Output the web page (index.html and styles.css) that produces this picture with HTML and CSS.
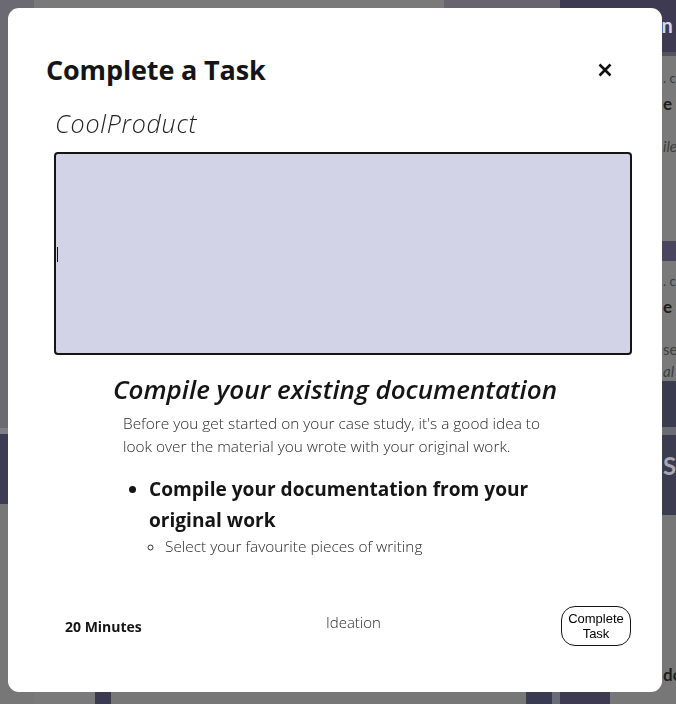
FILE: index.html
```html
<!DOCTYPE html>
<html lang="en">
<head>
<meta charset="utf-8">
<title>Complete a Task</title>
<link rel="stylesheet" href="styles.css">
</head>
<body>
<div class="page">
  <div class="col col-a">
    <div class="seg a1"></div>
    <div class="seg a2"></div>
    <div class="seg a3"></div>
    <div class="seg a4"></div>
  </div>
  <div class="col col-b"></div>
  <div class="col col-c">
    <div class="seg c1"></div>
    <div class="seg c2"></div>
  </div>
  <div class="col col-d">
    <div class="seg d1"></div>
    <div class="seg d2"></div>
  </div>
  <div class="col col-e">
    <div class="seg e1"></div>
    <div class="seg e2"></div>
  </div>
  <div class="col col-f">
    <div class="seg f1"></div>
    <div class="seg f2"></div>
  </div>
  <div class="col col-g">
    <div class="seg g1"></div>
    <div class="seg g2"></div>
  </div>
  <div class="col col-h"></div>
  <div class="col col-i">
    <div class="bg-head"><span>Plan</span></div>
    <div class="bg-card">
      <p class="bg-meta">. c</p>
      <p class="bg-title">e y</p>
      <p class="bg-sub">ile</p>
    </div>
    <div class="bg-band"></div>
    <div class="bg-card bg-card2">
      <p class="bg-meta">. c</p>
      <p class="bg-title">e y</p>
      <p class="bg-text">se</p>
      <p class="bg-sub">al</p>
    </div>
    <div class="bg-dark"></div>
    <div class="bg-section"><span>S</span></div>
    <div class="bg-rest"><p class="bg-title">dc</p></div>
  </div>
</div>

<div class="modal" role="dialog" aria-labelledby="modal-title">
  <div class="modal-header">
    <h2 id="modal-title" class="modal-title">Complete a Task</h2>
    <button class="close-btn" aria-label="Close">
      <svg width="14" height="14" viewBox="0 0 14 14"><path d="M1.5 1.5 L12.5 12.5 M12.5 1.5 L1.5 12.5" stroke="#111" stroke-width="2.6" stroke-linecap="butt"/></svg>
    </button>
  </div>
  <p class="product">CoolProduct</p>
  <div class="editor"><span class="caret"></span></div>

  <div class="task">
    <h3 class="task-title">Compile your existing documentation</h3>
    <div class="task-body">
      <p class="task-desc">Before you get started on your case study, it's a good idea to look over the material you wrote with your original work.</p>
      <ul class="steps">
        <li class="step">Compile your documentation from your original work
          <ul class="substeps">
            <li>Select your favourite pieces of writing</li>
          </ul>
        </li>
      </ul>
    </div>
  </div>

  <div class="modal-footer">
    <span class="duration">20 Minutes</span>
    <span class="phase">Ideation</span>
    <button class="complete-btn">Complete<br>Task</button>
  </div>
</div>
</body>
</html>
```

FILE: styles.css
```css
html, body {
  margin: 0;
  padding: 0;
}
body {
  width: 676px;
  height: 704px;
  overflow: hidden;
  font-family: "Open Sans", "Noto Sans", sans-serif;
  background: #777777;
}

/* background page (dimmed) */
.page {
  display: flex;
  height: 704px;
}
.col {
  display: flex;
  flex-direction: column;
}
.seg { flex: none; }
.col-a { width: 34px; }
.a1 { height: 428px; background: #6b6a73; }
.a2 { height: 6px; background: #808084; }
.a3 { height: 70px; background: #3c3c55; }
.a4 { flex: 1; background: #777777; }
.col-b { width: 61px; background: #7a7a7a; }
.col-c { width: 16px; }
.c1 { flex: 1; background: #7a7a7a; }
.c2 { height: 40px; background: #3a3a50; }
.col-d { width: 333px; }
.d1 { flex: 1; background: #7a7a7a; }
.d2 { height: 40px; background: #777777; }
.col-e { width: 82px; }
.e1 { flex: 1; background: #67646f; }
.e2 { height: 40px; background: #777777; }
.col-f { width: 26px; }
.f1 { flex: 1; background: #67646f; }
.f2 { height: 40px; background: #3a3a52; }
.col-g { width: 8px; }
.g1 { flex: 1; background: #67646f; }
.g2 { height: 40px; background: #6a6a78; }
.col-h { width: 50px; background: #3d3a52; }
.col-i {
  width: 66px;
  background: #7a7a7a;
  overflow: hidden;
  white-space: nowrap;
  font-family: "Lato", sans-serif;
}
.col-i p { margin: 0; padding-left: 53px; }
.bg-head {
  height: 56px;
  background: #3d3a52;
  border-bottom: 4px solid #55525f;
  color: #d8d6e0;
  font-weight: 700;
  font-size: 20px;
  padding-left: 24px;
  box-sizing: border-box;
  line-height: 50px;
}
.bg-card {
  height: 185px;
  padding-top: 14px;
  box-sizing: border-box;
}
.bg-meta { font-size: 13px; color: #3c3c3c; line-height: 16px; }
.bg-title { font-size: 17px; font-weight: 700; color: #1e1e1e; line-height: 20px; margin-top: 8px !important; }
.bg-sub { font-size: 15px; font-style: italic; color: #3e3e3e; line-height: 20px; margin-top: 22px !important; }
.bg-band { height: 20px; background: #4a4660; }
.bg-card2 { height: 120px; padding-top: 12px; }
.bg-card2 .bg-text { font-size: 15px; color: #3e3e3e; line-height: 20px; margin-top: 22px !important; }
.bg-card2 .bg-sub { margin-top: 2px !important; }
.bg-dark { height: 46px; background: #3b3b4f; border-bottom: 8px solid #6c6b75; }
.bg-section {
  height: 80px;
  background: #3d3b4f;
  color: #a8a7b4;
  font-weight: 700;
  font-size: 24px;
  line-height: 62px;
  padding-left: 53px;
  box-sizing: border-box;
}
.bg-rest { flex: 1; background: #777777; padding-top: 142px; }

/* modal */
.modal {
  position: fixed;
  top: 8px;
  left: 8px;
  width: 654px;
  height: 684px;
  box-sizing: border-box;
  background: #ffffff;
  border-radius: 11px;
  display: flex;
  flex-direction: column;
  color: #151515;
}
.modal-header {
  display: flex;
  justify-content: space-between;
  align-items: center;
  margin: 45px 50px 0 38px;
}
.modal-title {
  margin: 0;
  font-size: 27px;
  font-weight: 700;
  line-height: 34px;
  letter-spacing: -0.15px;
  color: #151515;
}
.close-btn {
  border: 0;
  background: transparent;
  padding: 0;
  width: 14px;
  height: 14px;
  display: flex;
}
.product {
  margin: 20px 0 0 47px;
  font-size: 25px;
  font-style: italic;
  font-weight: 300;
  line-height: 32px;
  letter-spacing: 0.75px;
  color: #222;
}
.editor {
  margin: 13px 30px 0 46px;
  height: 203px;
  box-sizing: border-box;
  border: 2px solid #151515;
  border-radius: 4px;
  background: #d3d3e8;
  display: flex;
  align-items: center;
  padding-left: 1px;
}
.caret {
  width: 1px;
  height: 15px;
  background: #111;
  margin-top: 2px;
}
.task {
  margin-top: 17px;
  display: flex;
  flex-direction: column;
  align-items: center;
}
.task-title {
  margin: 0;
  font-size: 26px;
  font-style: italic;
  font-weight: 600;
  line-height: 34px;
  color: #151515;
}
.task-body {
  width: 424px;
}
.task-desc {
  margin: 6px 0 0 0;
  font-size: 15.4px;
  font-weight: 300;
  line-height: 23px;
  color: #2a2a2a;
}
.steps {
  margin: 16px 0 0 0;
  padding-left: 26px;
}
.step {
  font-size: 19.1px;
  font-weight: 700;
  line-height: 31px;
  color: #151515;
}
.substeps {
  list-style: circle;
  margin: 1px 0 0 0;
  padding-left: 16px;
}
.substeps li {
  font-size: 15.4px;
  font-weight: 300;
  line-height: 20px;
  color: #2a2a2a;
}
.modal-footer {
  margin: auto 31px 46px 57px;
  display: flex;
  justify-content: space-between;
  align-items: center;
}
.duration {
  font-size: 14px;
  font-weight: 700;
  color: #151515;
}
.phase {
  font-size: 15px;
  font-weight: 300;
  color: #2a2a2a;
  margin-bottom: 8px;
  margin-left: 4px;
}
.complete-btn {
  width: 70px;
  height: 40px;
  border: 1px solid #151515;
  border-radius: 14px;
  background: #fff;
  font-family: "Liberation Sans", Arial, sans-serif;
  font-size: 13px;
  line-height: 15px;
  color: #000;
  padding: 0;
}
```
